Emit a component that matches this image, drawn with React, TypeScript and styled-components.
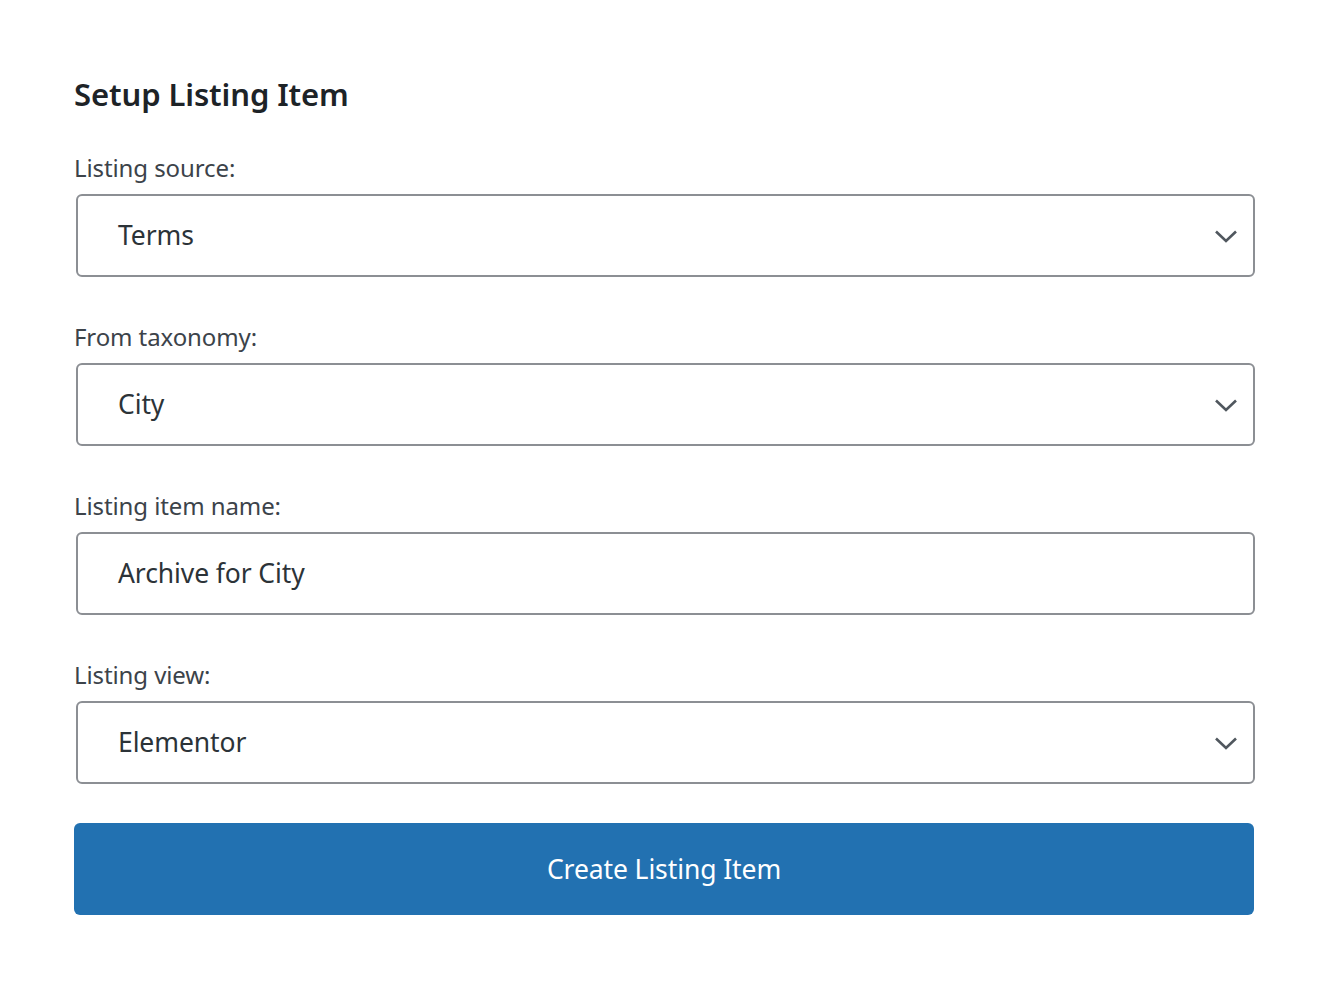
import React from "react";
import styled, { createGlobalStyle } from "styled-components";

const Global = createGlobalStyle`
  html, body { margin: 0; padding: 0; background: #ffffff; }
  body { font-family: "Noto Sans", "Open Sans", sans-serif; }
  * { box-sizing: border-box; }
`;

const Page = styled.div`
  width: 1324px;
  min-height: 984px;
  background: #fff;
  padding: 70px 70px 0 74px;
`;

const Title = styled.h2`
  margin: 0 0 34px 0;
  font-size: 31px;
  line-height: 48px;
  font-weight: 600;
  color: #1d2327;
  letter-spacing: -0.1px;
`;

const Form = styled.div`
  display: flex;
  flex-direction: column;
  gap: 44px;
  width: 1181px;
`;

const Field = styled.div`
  display: flex;
  flex-direction: column;
  gap: 10px;
`;

const Label = styled.label`
  font-size: 24px;
  line-height: 32px;
  color: #3c434a;
  letter-spacing: -0.1px;
`;

const Control = styled.div`
  position: relative;
  margin-left: 2px;
  height: 83px;
  border: 2px solid #8c8f94;
  border-radius: 6px;
  display: flex;
  align-items: center;
  padding: 0 40px 2px;
  font-size: 26.5px;
  color: #2c3338;
  letter-spacing: -0.1px;
`;

const Chevron = styled.svg`
  position: absolute;
  right: 14px;
  top: 50%;
  transform: translateY(-50%);
`;

const Button = styled.button`
  margin-top: -5px;
  height: 92px;
  border: none;
  border-radius: 6px;
  background: #2271b1;
  color: #ffffff;
  font-family: "Noto Sans", "Open Sans", sans-serif;
  font-size: 26.5px;
  letter-spacing: -0.1px;
  cursor: pointer;
  width: 1180px;
`;

const ChevronIcon = () => (
  <Chevron width="26" height="16" viewBox="0 0 26 16">
    <path d="M3 3.5 L13 13 L23 3.5" fill="none" stroke="#50575e" strokeWidth="2.6" />
  </Chevron>
);

type FieldProps = { label: string; value: string; select?: boolean };

const FormField = ({ label, value, select }: FieldProps) => (
  <Field>
    <Label>{label}</Label>
    <Control>
      {value}
      {select && <ChevronIcon />}
    </Control>
  </Field>
);

export default function App() {
  return (
    <>
      <Global />
      <Page>
        <Title>Setup Listing Item</Title>
        <Form>
          <FormField label="Listing source:" value="Terms" select />
          <FormField label="From taxonomy:" value="City" select />
          <FormField label="Listing item name:" value="Archive for City" />
          <FormField label="Listing view:" value="Elementor" select />
          <Button>Create Listing Item</Button>
        </Form>
      </Page>
    </>
  );
}
